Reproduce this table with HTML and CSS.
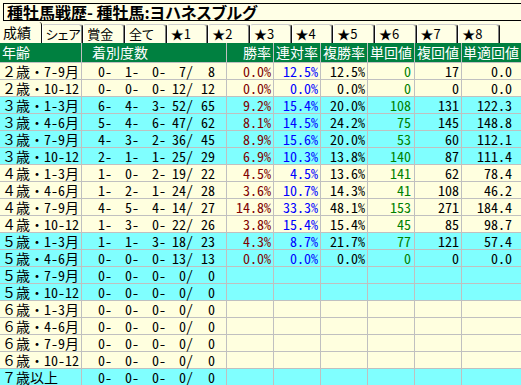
FILE: index.html
```html
<!DOCTYPE html>
<html lang="ja">
<head>
<meta charset="utf-8">
<title>種牡馬戦歴</title>
<link rel="stylesheet" href="styles.css">
</head>
<body>
<div class="page">
  <div class="title">種牡馬戦歴- 種牡馬:ヨハネスブルグ</div>
  <div class="tabs">
    <div class="tab active">成績</div>
    <div class="tab">シェア</div>
    <div class="tab">賞金</div>
    <div class="tab">全て</div>
    <div class="tab">★1</div>
    <div class="tab">★2</div>
    <div class="tab">★3</div>
    <div class="tab">★4</div>
    <div class="tab">★5</div>
    <div class="tab">★6</div>
    <div class="tab">★7</div>
    <div class="tab">★8</div>
  </div>
  <table class="grid">
    <colgroup>
      <col class="c-age"><col class="c-cnt"><col class="c-n"><col class="c-n"><col class="c-n"><col class="c-n"><col class="c-n"><col class="c-last">
    </colgroup>
    <thead>
      <tr><th class="h-age">年齢</th><th class="h-cnt">着別度数</th><th>勝率</th><th>連対率</th><th>複勝率</th><th>単回値</th><th>複回値</th><th class="h-last">単適回値</th></tr>
    </thead>
    <tbody>
      <tr class="y"><td class="age">２歳・7-9月</td><td class="cnt"><span>0-</span><span>1-</span><span>0-</span><span>7/</span><span class="e">8</span></td><td class="win">0.0%</td><td class="ren">12.5%</td><td>12.5%</td><td class="tan">0</td><td>17</td><td class="last">0.0</td></tr>
      <tr class="y"><td class="age">２歳・10-12</td><td class="cnt"><span>0-</span><span>0-</span><span>0-</span><span>12/</span><span class="e">12</span></td><td class="win">0.0%</td><td class="ren">0.0%</td><td>0.0%</td><td class="tan">0</td><td>0</td><td class="last">0.0</td></tr>
      <tr class="c"><td class="age">３歳・1-3月</td><td class="cnt"><span>6-</span><span>4-</span><span>3-</span><span>52/</span><span class="e">65</span></td><td class="win">9.2%</td><td class="ren">15.4%</td><td>20.0%</td><td class="tan">108</td><td>131</td><td class="last">122.3</td></tr>
      <tr class="c"><td class="age">３歳・4-6月</td><td class="cnt"><span>5-</span><span>4-</span><span>6-</span><span>47/</span><span class="e">62</span></td><td class="win">8.1%</td><td class="ren">14.5%</td><td>24.2%</td><td class="tan">75</td><td>145</td><td class="last">148.8</td></tr>
      <tr class="c"><td class="age">３歳・7-9月</td><td class="cnt"><span>4-</span><span>3-</span><span>2-</span><span>36/</span><span class="e">45</span></td><td class="win">8.9%</td><td class="ren">15.6%</td><td>20.0%</td><td class="tan">53</td><td>60</td><td class="last">112.1</td></tr>
      <tr class="c"><td class="age">３歳・10-12</td><td class="cnt"><span>2-</span><span>1-</span><span>1-</span><span>25/</span><span class="e">29</span></td><td class="win">6.9%</td><td class="ren">10.3%</td><td>13.8%</td><td class="tan">140</td><td>87</td><td class="last">111.4</td></tr>
      <tr class="y"><td class="age">４歳・1-3月</td><td class="cnt"><span>1-</span><span>0-</span><span>2-</span><span>19/</span><span class="e">22</span></td><td class="win">4.5%</td><td class="ren">4.5%</td><td>13.6%</td><td class="tan">141</td><td>62</td><td class="last">78.4</td></tr>
      <tr class="y"><td class="age">４歳・4-6月</td><td class="cnt"><span>1-</span><span>2-</span><span>1-</span><span>24/</span><span class="e">28</span></td><td class="win">3.6%</td><td class="ren">10.7%</td><td>14.3%</td><td class="tan">41</td><td>108</td><td class="last">46.2</td></tr>
      <tr class="y"><td class="age">４歳・7-9月</td><td class="cnt"><span>4-</span><span>5-</span><span>4-</span><span>14/</span><span class="e">27</span></td><td class="win">14.8%</td><td class="ren">33.3%</td><td>48.1%</td><td class="tan">153</td><td>271</td><td class="last">184.4</td></tr>
      <tr class="y"><td class="age">４歳・10-12</td><td class="cnt"><span>1-</span><span>3-</span><span>0-</span><span>22/</span><span class="e">26</span></td><td class="win">3.8%</td><td class="ren">15.4%</td><td>15.4%</td><td class="tan">45</td><td>85</td><td class="last">98.7</td></tr>
      <tr class="c"><td class="age">５歳・1-3月</td><td class="cnt"><span>1-</span><span>1-</span><span>3-</span><span>18/</span><span class="e">23</span></td><td class="win">4.3%</td><td class="ren">8.7%</td><td>21.7%</td><td class="tan">77</td><td>121</td><td class="last">57.4</td></tr>
      <tr class="c"><td class="age">５歳・4-6月</td><td class="cnt"><span>0-</span><span>0-</span><span>0-</span><span>13/</span><span class="e">13</span></td><td class="win">0.0%</td><td class="ren">0.0%</td><td>0.0%</td><td class="tan">0</td><td>0</td><td class="last">0.0</td></tr>
      <tr class="c"><td class="age">５歳・7-9月</td><td class="cnt"><span>0-</span><span>0-</span><span>0-</span><span>0/</span><span class="e">0</span></td><td></td><td></td><td></td><td></td><td></td><td class="last"></td></tr>
      <tr class="c"><td class="age">５歳・10-12</td><td class="cnt"><span>0-</span><span>0-</span><span>0-</span><span>0/</span><span class="e">0</span></td><td></td><td></td><td></td><td></td><td></td><td class="last"></td></tr>
      <tr class="y"><td class="age">６歳・1-3月</td><td class="cnt"><span>0-</span><span>0-</span><span>0-</span><span>0/</span><span class="e">0</span></td><td></td><td></td><td></td><td></td><td></td><td class="last"></td></tr>
      <tr class="y"><td class="age">６歳・4-6月</td><td class="cnt"><span>0-</span><span>0-</span><span>0-</span><span>0/</span><span class="e">0</span></td><td></td><td></td><td></td><td></td><td></td><td class="last"></td></tr>
      <tr class="y"><td class="age">６歳・7-9月</td><td class="cnt"><span>0-</span><span>0-</span><span>0-</span><span>0/</span><span class="e">0</span></td><td></td><td></td><td></td><td></td><td></td><td class="last"></td></tr>
      <tr class="y"><td class="age">６歳・10-12</td><td class="cnt"><span>0-</span><span>0-</span><span>0-</span><span>0/</span><span class="e">0</span></td><td></td><td></td><td></td><td></td><td></td><td class="last"></td></tr>
      <tr class="c"><td class="age">７歳以上</td><td class="cnt"><span>0-</span><span>0-</span><span>0-</span><span>0/</span><span class="e">0</span></td><td></td><td></td><td></td><td></td><td></td><td class="last"></td></tr>
    </tbody>
  </table>
</div>
</body>
</html>
```
FILE: styles.css
```css
html, body {
  margin: 0;
  padding: 0;
}
body {
  background: #ffffe6;
  width: 521px;
  height: 385px;
  overflow: hidden;
  font-family: "Noto Sans Mono CJK JP", "Noto Sans CJK JP", monospace;
  font-size: 14px;
  color: #000;
}
.page {
  width: 521px;
}
.title {
  box-sizing: border-box;
  margin: 3px 0 0 3px;
  height: 18px;
  border: 1px solid #000;
  border-right: 0;
  padding-left: 3px;
  font-family: "Noto Sans CJK JP", sans-serif;
  font-weight: bold;
  font-size: 16px;
  line-height: 16px;
  font-feature-settings: "palt";
  white-space: nowrap;
}
.tabs {
  display: flex;
  height: 22px;
  box-sizing: border-box;
  font-family: "Noto Sans CJK JP", sans-serif;
  font-size: 13px;
}
.tab {
  flex: 0 0 41.67px;
  box-sizing: border-box;
  margin-top: 3px;
  height: 19px;
  border-top: 1px solid #cfcfcf;
  border-left: 1px solid #ffffff;
  border-right: 1px solid #101010;
  border-radius: 3px 3px 0 0;
  box-shadow: inset -1px 0 0 #808080;
  padding-left: 3px;
  line-height: 17px;
  white-space: nowrap;
  font-feature-settings: "palt";
}
.tab.active {
  margin-top: 1px;
  height: 21px;
  border-top: 0;
  border-left: 0;
  padding-left: 3px;
  line-height: 20px;
  box-shadow: none;
  font-size: 14px;
}
.grid {
  border-collapse: separate;
  border-spacing: 0;
  table-layout: fixed;
  width: 521px;
}
.c-age { width: 82px; }
.c-cnt { width: 145px; }
.c-n { width: 47px; }
.c-last { width: 59px; }
th, td {
  box-sizing: border-box;
  padding: 0;
  border-right: 1px solid #c0c0c0;
  border-bottom: 1px solid #c0c0c0;
  white-space: nowrap;
}
th {
  height: 20px;
  background: #008040;
  color: #fff;
  font-family: "Noto Sans CJK JP", sans-serif;
  font-weight: normal;
  font-size: 14px;
  line-height: 19px;
  text-align: right;
  padding-right: 2px;
}
th.h-age {
  text-align: left;
  padding-left: 2px;
}
th.h-cnt {
  text-align: left;
  padding-left: 10px;
}
th.h-last, td.last {
  border-right: 0;
}
td {
  height: 17px;
  line-height: 16px;
  text-align: right;
  padding-right: 2px;
}
tr.y td { background: #ffffdf; }
tr.c td { background: #80ffff; }
td.age {
  text-align: left;
  padding-left: 2px;
}
td.cnt {
  text-align: left;
  padding-left: 3px;
}
td.cnt span {
  display: inline-block;
  width: 27px;
  text-align: right;
}
td.cnt span.e {
  width: 22px;
}
td.win { color: #800000; }
td.ren { color: #0000ff; }
td.tan { color: #008000; padding-right: 3px; }
td.last { padding-right: 9px; }
```
